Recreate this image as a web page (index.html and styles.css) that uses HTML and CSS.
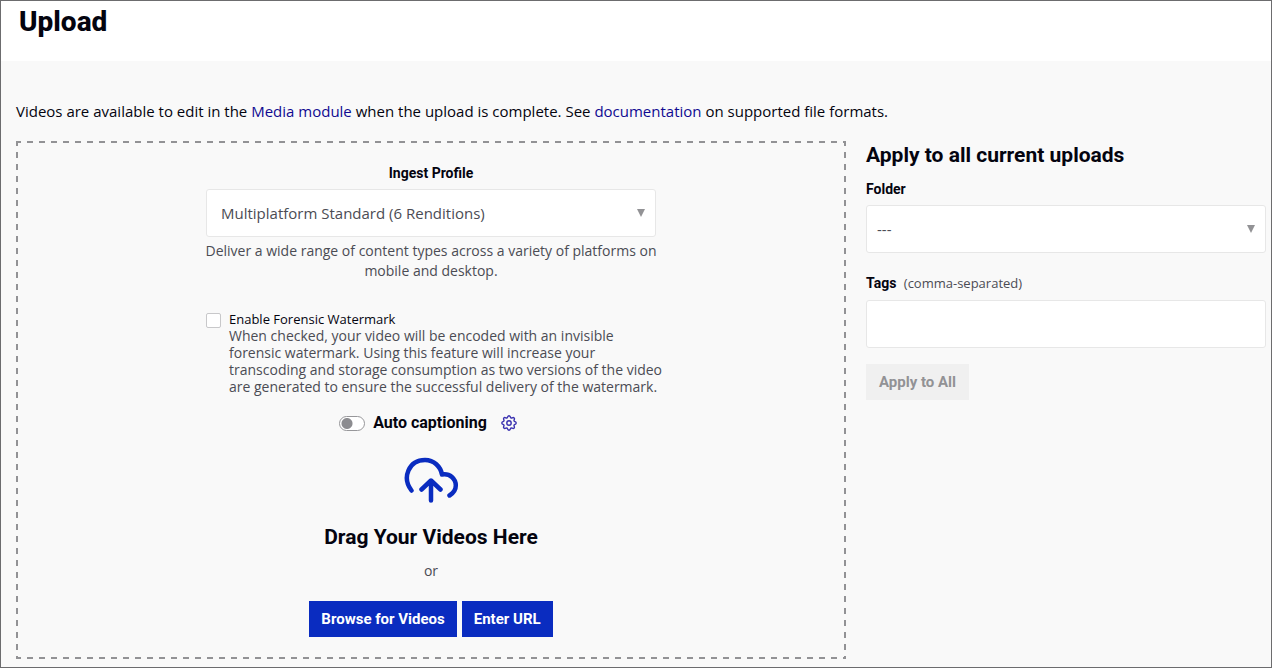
FILE: index.html
```html
<!DOCTYPE html>
<html lang="en">
<head>
<meta charset="utf-8">
<meta name="viewport" content="width=device-width, initial-scale=1">
<title>Upload</title>
<link rel="stylesheet" href="styles.css">
</head>
<body>
<div class="page">
  <header class="page-header"><h1 class="page-title">Upload</h1></header>
  <main class="content">
    <p class="intro">Videos are available to edit in the <a href="#media">Media module</a> when the upload is complete. See <a href="#documentation">documentation</a> on supported file formats.</p>
    <div class="columns">
      <section class="dropzone">
        <label class="label" for="profile">Ingest Profile</label>
        <div class="select-wrap profile-select">
          <select id="profile" class="field"><option>Multiplatform Standard (6 Renditions)</option></select>
        </div>
        <p class="profile-note">Deliver a wide range of content types across a variety of platforms on mobile and desktop.</p>
        <div class="watermark">
          <input type="checkbox" id="watermark" class="checkbox" aria-describedby="watermark-note">
          <div class="watermark-text">
            <label class="watermark-label" for="watermark">Enable Forensic Watermark</label>
            <p id="watermark-note">When checked, your video will be encoded with an invisible<br>forensic watermark. Using this feature will increase your<br>transcoding and storage consumption as two versions of the video<br>are generated to ensure the successful delivery of the watermark.</p>
          </div>
        </div>
        <div class="captioning">
          <input type="checkbox" role="switch" id="captioning" class="switch">
          <label class="captioning-label" for="captioning">Auto captioning</label>
          <button type="button" class="icon-button" aria-label="Captioning settings">
            <svg width="16" height="16" viewBox="0 0 16 16" fill="none" stroke="#3a31b0" stroke-width="1.4" stroke-linejoin="round"><path d="M8 .8C9.500 .8 9.200 2.700 10.100 3S12 1.900 13.100 2.900S12.700 5 13 5.900S15.200 6.500 15.200 8S13.300 9.200 13 10.100S14.100 12 13.100 13.100S11 12.700 10.100 13S9.500 15.200 8 15.200S6.800 13.300 5.900 13S4 14.100 2.900 13.100S3.300 11 3 10.100S.8 9.500 .8 8S2.700 6.800 3 5.900S1.900 4 2.900 2.900S5 3.300 5.900 3S6.500 .8 8 .8z"/><circle cx="8" cy="8" r="2.200"/></svg>
          </button>
        </div>
        <svg class="cloud" width="56" height="46" viewBox="0 0 56 46" fill="none" stroke="#0a2cc0" stroke-width="4.500" stroke-linecap="round" stroke-linejoin="round"><path d="M8.500 33.500C-1.500 20.500 6 3 22 3C31 3 37.500 9.500 39 17.500C47 16 52.800 22 52.800 28.500C52.800 32.500 50.500 36 46.500 38.500M28 43.500V24M18.500 32.500L28 23.500L37.500 32.500"/></svg>
        <h2 class="heading">Drag Your Videos Here</h2>
        <p class="or">or</p>
        <div class="actions">
          <button type="button" class="button">Browse for Videos</button>
          <button type="button" class="button">Enter URL</button>
        </div>
      </section>
      <aside class="apply">
        <h2 class="heading">Apply to all current uploads</h2>
        <label class="label folder-label" for="folder">Folder</label>
        <div class="select-wrap folder-select">
          <select id="folder" class="field"><option>---</option></select>
        </div>
        <label class="label tags-label" for="tags">Tags <span class="hint">(comma-separated)</span></label>
        <input type="text" id="tags" class="field">
        <button type="button" class="button apply-button" disabled>Apply to All</button>
      </aside>
    </div>
  </main>
</div>
</body>
</html>
```
FILE: styles.css
```css
*, *::before, *::after { box-sizing: border-box; }
body {
  margin: 0;
  font-family: "Open Sans", "Liberation Sans", sans-serif;
  font-size: 14px;
  line-height: 20px;
  color: #04040f;
}
h1, h2, p { margin: 0; }
button, input, select { font: inherit; margin: 0; }
.page {
  display: flex;
  flex-direction: column;
  min-height: 100vh;
  border: 1px solid #6c6c6e;
  background: #f9f9f9;
}
.page-header { padding: 5px 18px 23px; background: #fff; }
.page-title, .heading, .label, .captioning-label, .button { font-family: Roboto, "Liberation Sans", sans-serif; }
.page-title { font-size: 28px; line-height: 32px; font-weight: 800; }
.content { flex: 1; padding: 40px 5px 8px 15px; }
.intro { font-size: 15px; line-height: 20px; }
.intro a { color: #100a91; text-decoration: none; }
.columns {
  display: grid;
  grid-template-columns: 83fr 40fr;
  gap: 20px;
  margin-top: 20px;
}
.dropzone {
  --dash: #929295 0 5px, transparent 5px 11px, #929295 11px 12px;
  display: flex;
  flex-direction: column;
  align-items: center;
  padding: 22px 16px;
  background:
    repeating-linear-gradient(90deg, var(--dash)) top / 100% 2px no-repeat,
    repeating-linear-gradient(90deg, var(--dash)) bottom / 100% 2px no-repeat,
    repeating-linear-gradient(180deg, var(--dash)) left / 2px 100% no-repeat,
    repeating-linear-gradient(180deg, var(--dash)) right / 2px 100% no-repeat;
}
.label { font-size: 14px; line-height: 20px; font-weight: 700; }
.select-wrap { position: relative; }
.select-wrap::after {
  content: "";
  position: absolute;
  top: 20px;
  right: 11px;
  width: 8px;
  height: 8px;
  background: #929295;
  clip-path: polygon(0 0, 100% 0, 50% 100%);
  pointer-events: none;
}
.field {
  display: block;
  width: 100%;
  height: 48px;
  padding: 0 10px;
  border: 1px solid #e7e7e7;
  border-radius: 3px;
  background: #fff;
  color: #4b4c54;
  font-size: 15px;
  appearance: none;
}
.profile-select { width: 100%; max-width: 450px; margin-top: 6px; }
.profile-select .field { padding: 0 14px; }
.profile-note { max-width: 460px; margin-top: 4px; text-align: center; color: #4b4c54; }
.watermark { display: flex; gap: 8px; width: 100%; max-width: 450px; margin-top: 30px; line-height: 17px; }
.checkbox {
  flex: none;
  width: 15px;
  height: 15px;
  margin-top: 2px;
  border: 1px solid #c8c8ca;
  border-radius: 2px;
  background: #fff;
  appearance: none;
}
.checkbox:checked { background: #0a2cc0; }
.watermark-text { color: #4b4c54; white-space: nowrap; }
.watermark-label { display: block; font-size: 13px; line-height: 16px; color: #04040f; }
.captioning { display: flex; align-items: center; margin-top: 18px; }
.switch {
  width: 26px;
  height: 15px;
  margin-right: 8px;
  border: 1px solid #97979a;
  border-radius: 8px;
  background: radial-gradient(circle at 7px 50%, #8c8c90 5px, #fff 6px);
  appearance: none;
}
.switch:checked { background: radial-gradient(circle at 17px 50%, #0a2cc0 5px, #fff 6px); }
.captioning-label { font-size: 16px; font-weight: 700; }
.icon-button { display: flex; margin: 0 6px 0 14px; padding: 0; border: 0; background: none; cursor: pointer; }
.cloud { margin-top: 24px; }
.heading { font-size: 21px; line-height: 28px; font-weight: 700; }
.dropzone .heading { margin-top: 20px; }
.or { margin-top: 10px; color: #4b4c54; }
.actions { display: flex; gap: 5px; margin-top: 20px; }
.button {
  height: 36px;
  padding: 0 12px;
  border: 0;
  background: #0a2cc0;
  color: #fff;
  font-size: 15px;
  font-weight: 700;
  white-space: nowrap;
}
.apply { display: flex; flex-direction: column; align-items: flex-start; }
.folder-label { margin-top: 10px; }
.folder-select { width: 100%; margin-top: 6px; }
.tags-label { margin: 20px 0 7px; }
.hint { margin-left: 4px; font-family: "Open Sans", sans-serif; font-size: 13px; font-weight: 400; color: #4b4c54; }
.apply-button { margin-top: 16px; padding: 0 13px; background: #f0f0f0; color: #929295; }
```
